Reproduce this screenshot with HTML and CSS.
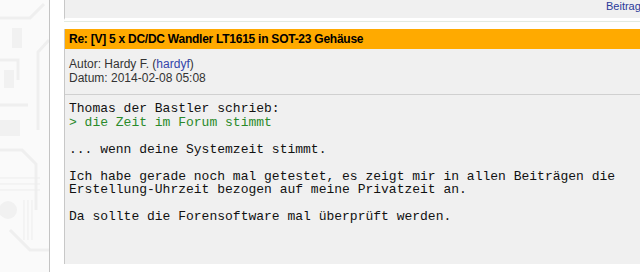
FILE: index.html
```html
<!DOCTYPE html>
<html lang="de">
<head>
  <meta charset="UTF-8">
  <title>Re: [V] 5 x DC/DC Wandler LT1615 in SOT-23 Gehäuse</title>
  <link rel="stylesheet" href="styles.css">
</head>
<body>
  <div class="side">
    <svg class="circuit" width="49" height="272" viewBox="0 0 49 272">
      <g fill="none" stroke="#efefef" stroke-width="3">
        <path d="M0 18 L30 18 L44 4"/>
        <path d="M0 60 L18 60 L18 80"/>
        <path d="M49 40 L38 52 L38 130"/>
        <path d="M0 105 L28 105"/>
        <path d="M0 150 L22 150 L36 164 L36 210"/>
        <path d="M10 230 L30 250 L49 250"/>
      </g>
      <g fill="#f1f1f1">
        <rect x="12" y="28" width="10" height="20"/>
        <rect x="4" y="70" width="10" height="18"/>
        <rect x="0" y="120" width="20" height="16"/>
        <circle cx="8" cy="210" r="9"/>
      </g>
      <g fill="none" stroke="#ededed" stroke-width="1">
        <path d="M0 178 L40 178 M0 184 L40 184 M0 190 L40 190"/>
        <path d="M24 200 L24 240 M28 200 L28 240 M32 200 L32 240"/>
      </g>
    </svg>
  </div>
  <div class="main">
    <div class="prev">
      <a class="prev-link" href="#">Beitrag melden</a>
    </div>
    <div class="post">
      <div class="post-title">Re: [V] 5 x DC/DC Wandler LT1615 in SOT-23 Gehäuse</div>
      <div class="post-meta">
        <div>Autor: Hardy F. (<a href="#">hardyf</a>)</div>
        <div>Datum: 2014-02-08 05:08</div>
      </div>
      <div class="post-body">
        <div>Thomas der Bastler schrieb:</div>
        <div class="quote">&gt; die Zeit im Forum stimmt</div>
        <div>&nbsp;</div>
        <div>... wenn deine Systemzeit stimmt.</div>
        <div>&nbsp;</div>
        <div>Ich habe gerade noch mal getestet, es zeigt mir in allen Beiträgen die</div>
        <div>Erstellung-Uhrzeit bezogen auf meine Privatzeit an.</div>
        <div>&nbsp;</div>
        <div>Da sollte die Forensoftware mal überprüft werden.</div>
      </div>
    </div>
  </div>
</body>
</html>
```

FILE: styles.css
```css
body {
  margin: 0;
  display: flex;
  height: 272px;
  overflow: hidden;
  background: #fafafa;
  font-family: "Liberation Sans", Arial, sans-serif;
}
.side {
  width: 49px;
  flex: none;
  border-right: 1px solid #c4c4c4;
}
.circuit {
  display: block;
}
.main {
  flex: 1;
  min-width: 0;
  background: #fff;
  padding-left: 14px;
  overflow: hidden;
}
.prev {
  height: 18px;
  background: #f0f0f0;
  border-left: 1px solid #c8c8c8;
  border-bottom: 2px solid #fff;
  box-shadow: 0 1px 0 #fff, 0 2px 0 #e2ebe2;
  display: flex;
  justify-content: flex-end;
  align-items: flex-start;
  margin-bottom: 9px;
}
.prev-link {
  font-size: 11px;
  color: #2a3a9a;
  text-decoration: none;
  margin-right: -40px;
  line-height: 12px;
}
.post {
  border-left: 1px solid #c8c8c8;
  background: #f0f0f0;
}
.post-title {
  background: #ffaa00;
  height: 20px;
  line-height: 20px;
  padding-left: 4px;
  font-size: 12px;
  font-weight: bold;
  letter-spacing: -0.25px;
  color: #000;
  white-space: nowrap;
}
.post-meta {
  padding: 8px 4px 9px;
  font-size: 12px;
  line-height: 14px;
  color: #333;
  border-bottom: 1px solid #d0d0d0;
}
.post-meta a {
  color: #3344aa;
  text-decoration: none;
}
.post-body {
  padding: 7px 4px 40px;
  font-family: "Liberation Mono", "Courier New", monospace;
  font-size: 13px;
  line-height: 13.5px;
  color: #111;
  white-space: nowrap;
}
.quote {
  color: #2a8a2a;
}
```
